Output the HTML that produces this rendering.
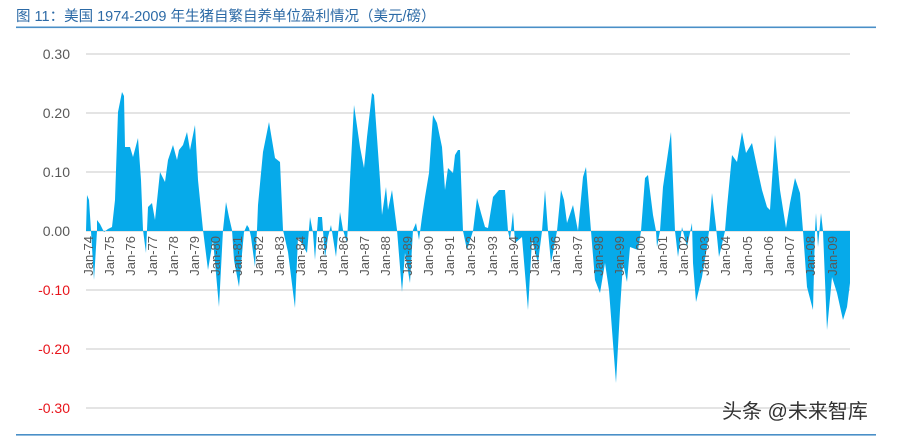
<!DOCTYPE html>
<html><head><meta charset="utf-8"><style>
html,body{margin:0;padding:0;background:#fff;width:901px;height:438px;overflow:hidden}
</style></head><body>
<svg width="901" height="438" xmlns="http://www.w3.org/2000/svg" style="position:absolute;left:0;top:0">
<text x="16" y="21" font-family="Liberation Sans, Noto Sans CJK SC, sans-serif" font-size="14.5" fill="#2c6aa6">图 11：美国 1974-2009 年生猪自繁自养单位盈利情况（美元/磅）</text>
<rect x="16" y="26.5" width="860" height="1.6" fill="#4a8fc7"/>
<g stroke="#dcdcdc" stroke-width="1.5">
<line x1="86" y1="54" x2="850" y2="54"/><line x1="86" y1="113" x2="850" y2="113"/><line x1="86" y1="172" x2="850" y2="172"/><line x1="86" y1="231" x2="850" y2="231"/><line x1="86" y1="290" x2="850" y2="290"/><line x1="86" y1="349" x2="850" y2="349"/><line x1="86" y1="408" x2="850" y2="408"/>
</g>
<g font-family="Liberation Sans, sans-serif" font-size="14" text-anchor="end">
<text x="70" y="59" fill="#595959">0.30</text><text x="70" y="118" fill="#595959">0.20</text><text x="70" y="177" fill="#595959">0.10</text><text x="70" y="236" fill="#595959">0.00</text>
<text x="70" y="295" fill="#e8141b">-0.10</text><text x="70" y="354" fill="#e8141b">-0.20</text><text x="70" y="413" fill="#e8141b">-0.30</text>
</g>
<path fill="#06aaea" d="M86,231 L87,195 89,200 91,231 94,280 97,231 97,220 100,224 104,232 108,229 112,227 115,200 118,112 122,92 124,96 125,147 130,147 133,157 138,138 141,180 143,230 146,253 148,207 152,203 155,220 160,172 165,182 168,160 173,145 177,160 179,150 183,145 187,132 190,150 195,125 198,180 203,230 208,270 213,240 219,307 223,230 226,202 229,217 232,230 234,260 239,287 244,232 247,225 249,228 251,237 255,267 257,230 258,205 263,152 269,122 272,140 275,158 280,162 283,230 288,252 295,308 298,237 307,253 310,217 313,233 315,260 318,217 322,217 325,258 328,237 331,225 336,257 340,212 343,230 347,243 350,180 354,105 360,147 364,168 367,137 372,93 374,95 380,180 382,215 386,187 388,210 392,190 397,230 402,292 405,253 410,283 413,230 416,223 419,240 422,217 425,197 429,173 433,115 437,123 442,147 445,190 448,168 453,173 455,155 458,150 460,150 463,231 467,250 473,231 477,198 481,213 485,227 488,228 493,197 499,190 505,190 508,231 510,240 513,212 515,243 522,237 528,310 532,240 538,263 542,231 545,190 548,231 551,263 557,231 561,190 564,200 567,223 573,205 578,231 583,177 586,167 591,231 595,280 600,293 605,263 609,290 616,383 620,310 623,263 627,282 630,247 638,250 641,231 645,178 648,175 653,215 656,231 657,247 660,231 663,187 671,132 675,231 678,257 682,227 687,247 692,223 693,263 696,302 702,277 707,247 709,231 712,193 716,227 719,257 725,231 727,207 732,155 737,162 742,132 746,153 752,143 757,167 762,190 767,207 770,210 775,135 780,190 786,228 790,203 795,178 800,193 803,231 807,287 813,310 815,231 816,213 818,247 821,213 823,231 827,330 832,277 837,293 843,320 847,307 850,283 850,231 Z"/>
<g font-family="Liberation Sans, sans-serif" font-size="13" fill="#595959" text-anchor="end">
<text transform="translate(93,236) rotate(-90)">Jan-74</text>
<text transform="translate(114,236) rotate(-90)">Jan-75</text>
<text transform="translate(135,236) rotate(-90)">Jan-76</text>
<text transform="translate(157,236) rotate(-90)">Jan-77</text>
<text transform="translate(178,236) rotate(-90)">Jan-78</text>
<text transform="translate(199,236) rotate(-90)">Jan-79</text>
<text transform="translate(220,236) rotate(-90)">Jan-80</text>
<text transform="translate(242,236) rotate(-90)">Jan-81</text>
<text transform="translate(263,236) rotate(-90)">Jan-82</text>
<text transform="translate(284,236) rotate(-90)">Jan-83</text>
<text transform="translate(305,236) rotate(-90)">Jan-84</text>
<text transform="translate(327,236) rotate(-90)">Jan-85</text>
<text transform="translate(348,236) rotate(-90)">Jan-86</text>
<text transform="translate(369,236) rotate(-90)">Jan-87</text>
<text transform="translate(390,236) rotate(-90)">Jan-88</text>
<text transform="translate(412,236) rotate(-90)">Jan-89</text>
<text transform="translate(433,236) rotate(-90)">Jan-90</text>
<text transform="translate(454,236) rotate(-90)">Jan-91</text>
<text transform="translate(475,236) rotate(-90)">Jan-92</text>
<text transform="translate(497,236) rotate(-90)">Jan-93</text>
<text transform="translate(518,236) rotate(-90)">Jan-94</text>
<text transform="translate(539,236) rotate(-90)">Jan-95</text>
<text transform="translate(560,236) rotate(-90)">Jan-96</text>
<text transform="translate(582,236) rotate(-90)">Jan-97</text>
<text transform="translate(603,236) rotate(-90)">Jan-98</text>
<text transform="translate(624,236) rotate(-90)">Jan-99</text>
<text transform="translate(645,236) rotate(-90)">Jan-00</text>
<text transform="translate(667,236) rotate(-90)">Jan-01</text>
<text transform="translate(688,236) rotate(-90)">Jan-02</text>
<text transform="translate(709,236) rotate(-90)">Jan-03</text>
<text transform="translate(730,236) rotate(-90)">Jan-04</text>
<text transform="translate(752,236) rotate(-90)">Jan-05</text>
<text transform="translate(773,236) rotate(-90)">Jan-06</text>
<text transform="translate(794,236) rotate(-90)">Jan-07</text>
<text transform="translate(815,236) rotate(-90)">Jan-08</text>
<text transform="translate(837,236) rotate(-90)">Jan-09</text>
</g>
<rect x="16" y="434" width="860" height="1.6" fill="#4a8fc7"/>
<text x="722" y="418" font-family="Liberation Sans, Noto Sans CJK SC, sans-serif" font-size="20" fill="#333">头条 @未来智库</text>
</svg>
</body></html>
